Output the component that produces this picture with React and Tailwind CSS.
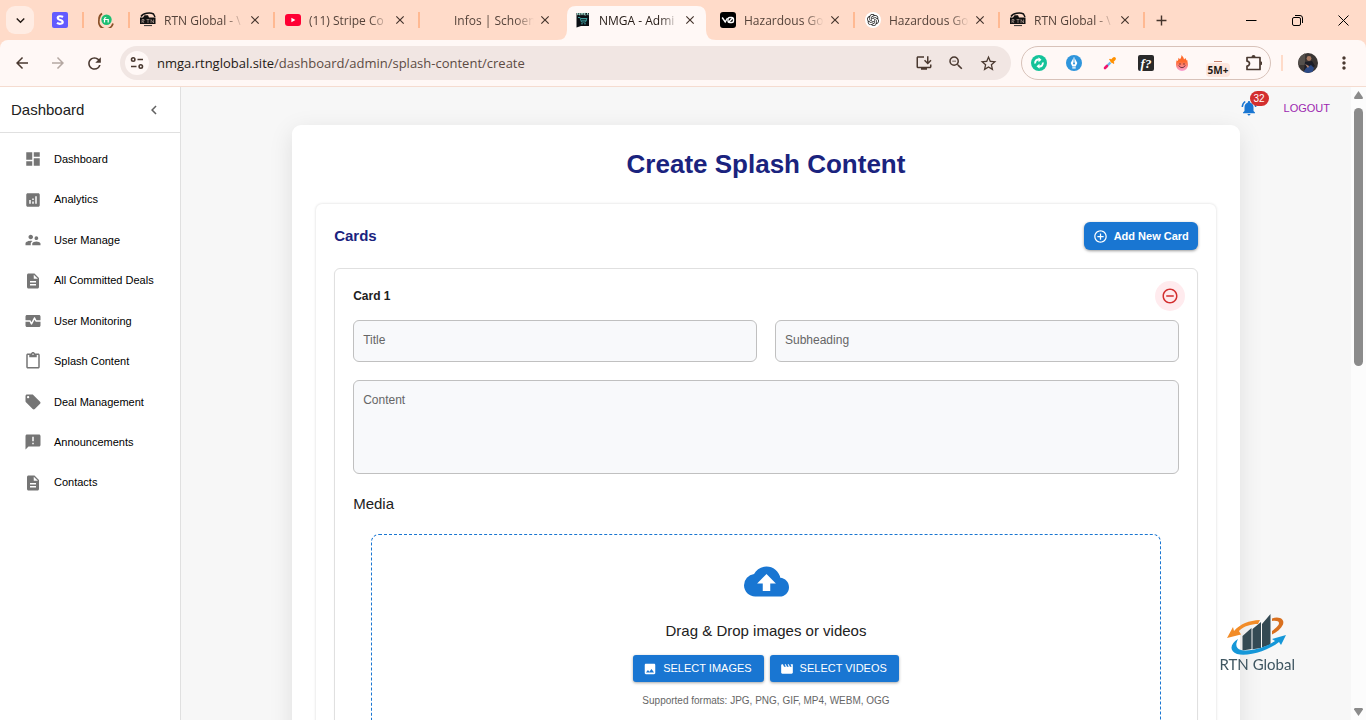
import React from "react";
import {
  MdDashboard, MdAnalytics, MdSupervisorAccount, MdDescription, MdMonitorHeart, MdContentPaste,
  MdLocalOffer, MdAnnouncement, MdNotificationsActive, MdAddCircleOutline, MdRemoveCircleOutline,
  MdCloudUpload, MdImage, MdMovie, MdChevronLeft, MdInstallDesktop, MdZoomOut, MdStarBorder,
  MdMoreVert, MdArrowBack, MdArrowForward, MdRefresh, MdClose, MdAdd, MdExpandMore,
} from "react-icons/md";
import { SiOpenai } from "react-icons/si";

const Stripe = () => (
  <svg viewBox="0 0 16 16" className="size-4">
    <rect width="16" height="16" rx="2" fill="#635bff" />
    <path d="M11 5C9.600 4 5.700 3.700 5.700 6c0 2.300 5 1.600 5 4 0 2.300-4 2.100-5.700.9" fill="none" stroke="#fff" strokeWidth="2.200" />
  </svg>
);
const Fiverr = () => (
  <svg viewBox="0 0 16 16" className="size-4">
    <circle cx="8.500" cy="7.700" r="5.200" fill="#1dbf73" />
    <path d="M4 1.500A7.200 7.200 0 0 0 1 8A7 7 0 0 0 15 11.500" fill="none" stroke="#8a5128" strokeWidth="1.700" />
    <path d="M6.500 10.500V7c0-1 .5-1.500 1.700-1.500M5.500 7.500h4.700v3" fill="none" stroke="#fff" strokeWidth="1.200" />
  </svg>
);
const Rtn = () => (
  <svg viewBox="0 0 16 16" className="size-4">
    <path d="M1 4.500C3 1.200 10 .2 13.500 2L15 5" fill="none" stroke="#111" strokeWidth="1.500" />
    <path d="M0 5.500h3l1.500-2.300h3.500l1 2.300h6.500V12H0z" fill="#111" />
    <path d="M2 11V7.500h2v1.500H2.500L4 11M6.500 7.500h3M8 7.500V11M11 11V7.500l2.500 3.500V7.500" fill="none" stroke="#e8cfc2" strokeWidth=".5" />
    <path d="M4 13.600h8" stroke="#333" strokeWidth="1" />
  </svg>
);
const Youtube = () => (
  <svg viewBox="0 0 16 16" className="size-4">
    <rect y="2" width="16" height="12" rx="3" fill="#ff0033" />
    <path d="M6.400 5.800v4.400L10.400 8z" fill="#fff" />
  </svg>
);
const Nmga = () => (
  <svg viewBox="0 0 16 16" className="size-4">
    <path d="M1.500 1H14v13H6l-4.500 1.500z" fill="#0b0f14" />
    <path d="M2.500 3.200V1l2 2.200V1M6 3.200V1l1 1.500L8 1v2.200M11 1H9.500v2H11M12 3.200l.6-2.200.6 2.200" fill="none" stroke="#bfe" strokeWidth=".7" />
    <path d="M3 5.500h2l1.500 4.500h4L12 6.500H6M6.500 8.200h5" fill="none" stroke="#3f9c9c" strokeWidth="1" />
    <circle cx="7" cy="11.700" r=".8" fill="#3f9c9c" /><circle cx="10" cy="11.700" r=".8" fill="#3f9c9c" />
  </svg>
);
const V0 = () => (
  <svg viewBox="0 0 16 16" className="size-4">
    <rect width="16" height="16" rx="3" fill="#000" />
    <path d="M2.200 5.500 5.200 10 7.500 6M8.500 10.300 13 5.700" fill="none" stroke="#fff" strokeWidth="1.400" />
    <rect x="8" y="5.500" width="5.500" height="5" rx="1.800" fill="none" stroke="#fff" strokeWidth="1.400" />
  </svg>
);
const Gpt = () => (
  <span className="flex size-4 items-center justify-center rounded-full bg-white text-[#222]"><SiOpenai size={12} /></span>
);

const tabs = [
  { icon: <Rtn />, title: "RTN Global - \\" },
  { icon: <Youtube />, title: "(11) Stripe Co" },
  { icon: <span className="size-4" />, title: "Infos | Schoen", next: true },
  { icon: <Nmga />, title: "NMGA - Admi", active: true },
  { icon: <V0 />, title: "Hazardous Go" },
  { icon: <Gpt />, title: "Hazardous Go" },
  { icon: <Rtn />, title: "RTN Global - \\" },
];

function Separator() {
  return <span className="h-4 w-0.5 shrink-0 bg-[#ffb992]" />;
}

function Tab({ icon, title, active, next }) {
  return (
    <div className="relative flex h-full w-[145px] min-w-0 items-center">
      {active && (
        <svg viewBox="0 0 159 34" preserveAspectRatio="none" className="absolute -left-2 bottom-0 h-[34px] w-[159px] text-[#fff8f6]">
          <path d="M0 34Q10 34 10 24V9Q10 0 19 0H140Q149 0 149 9V24Q149 34 159 34Z" fill="currentColor" />
        </svg>
      )}
      <div className="relative flex min-w-0 flex-1 items-center pl-2.5">
        <span className="flex size-4 shrink-0">{icon}</span>
        <span className={`ml-2 w-20 pt-0.5 text-xs whitespace-nowrap [mask-image:linear-gradient(to_right,black_76%,transparent_100%)] ${active ? "text-[#241a15]" : "text-[#55433a]"}`}>{title}</span>
        <button aria-label={`Close ${title}`} className="ml-[3px] flex size-4 shrink-0 items-center justify-center text-[#44342c]"><MdClose size={14} /></button>
      </div>
      {active || next ? <span className="w-0.5" /> : <Separator />}
    </div>
  );
}

function TabBar() {
  return (
    <div className="flex h-10 items-center bg-[#ffdbc9]">
      <button aria-label="Search tabs" className="ml-1.5 flex size-7 shrink-0 items-center justify-center rounded-[9px] bg-[#ffece3] text-[#241a15]"><MdExpandMore size={17} /></button>
      <div className="ml-1 flex w-[46px] shrink-0 items-center justify-between pl-3.5"><Stripe /><Separator /></div>
      <div className="flex w-[46px] shrink-0 items-center justify-between pl-3.5"><Fiverr /><Separator /></div>
      {tabs.map((t, i) => <Tab key={i} {...t} />)}
      <button aria-label="New tab" className="ml-1.5 flex size-5 items-center justify-center text-[#44342c]"><MdAdd size={17} /></button>
      <div className="ml-auto flex items-center text-black">
        <button aria-label="Minimize" className="flex h-8 w-[46px] items-center justify-center"><svg width="11" height="11"><path d="M0 5.500h10.500" stroke="currentColor" /></svg></button>
        <button aria-label="Restore" className="flex h-8 w-[46px] items-center justify-center"><svg width="11" height="11" fill="none" stroke="currentColor"><rect x=".5" y="2.500" width="8" height="8" rx="1.500" /><path d="M3 .5h5a2.500 2.500 0 0 1 2.500 2.500v5" /></svg></button>
        <button aria-label="Close window" className="flex h-8 w-[46px] items-center justify-center"><svg width="11" height="11"><path d="M.5.500l10 10M10.500.500l-10 10" stroke="currentColor" /></svg></button>
      </div>
    </div>
  );
}

function Extensions() {
  const cell = "flex w-9 items-center justify-center";
  return (
    <div className="ml-2.5 flex h-[34px] shrink-0 items-center rounded-full border border-[#d8c2b9]">
      <button aria-label="Sync" className="flex w-[34px] items-center justify-center">
        <svg viewBox="0 0 16 16" className="size-4"><circle cx="8" cy="8" r="8" fill="#15c39a" /><path d="M4.200 8.500C3.800 6 5.500 4.300 8 4.600M11.800 7.500c.4 2.500-1.300 4.200-3.800 3.900" fill="none" stroke="#fff" strokeWidth="1.900" /><path d="M7.500 2.300l3 2.500-3 2.400zM8.500 8.800l-3 2.500 3 2.400z" fill="#fff" /></svg>
      </button>
      <button aria-label="Pen" className={cell}>
        <svg viewBox="0 0 16 16" className="size-4"><circle cx="8" cy="8" r="8" fill="#2f95dc" /><path d="M8 2l3.300 6-1.600 3.500H6.300L4.700 8zM6.300 12.200h3.400v1.300H6.300z" fill="#fff" /><path d="M8 3v5.500" stroke="#2f95dc" strokeWidth=".8" /><circle cx="8" cy="8.600" r="1" fill="#2f95dc" /></svg>
      </button>
      <button aria-label="Color picker" className={cell}>
        <svg viewBox="0 0 16 16" className="size-4"><path d="M4.500 11.500l4-4" stroke="#6db8ea" strokeWidth="2.400" /><path d="M3 13l2-2" stroke="#f0146e" strokeWidth="2.600" strokeLinecap="round" /><path d="M8 4.500L11.500 8" stroke="#ff8a00" strokeWidth="1.600" strokeLinecap="round" /><path d="M10 6l2.200-2.200" stroke="#ff9100" strokeWidth="3.400" strokeLinecap="round" /></svg>
      </button>
      <button aria-label="Font finder" className={cell}>
        <span className="flex size-4 items-center justify-center rounded-xs bg-[#2a2a2a] font-['Liberation_Serif',serif] text-[13px] leading-none font-bold text-white italic">f?</span>
      </button>
      <button aria-label="Flame" className={cell}>
        <svg viewBox="0 0 16 16" className="size-4"><defs><linearGradient id="flame" x1="0" y1="0" x2="0" y2="1"><stop offset=".4" stopColor="#ff6a2b" /><stop offset="1" stopColor="#f9a0d6" /></linearGradient></defs><path d="M7.500 0c1 1.200 2.300 2.500 2.500 4.500L11.500 3c.3 1 .6 1.700 1.200 2.600L13.300 5c.1 1.800.7 3 .7 5A6 6 0 0 1 8 16 6 6 0 0 1 2 10c0-2 .3-3 .6-4.800l.9.8C4.500 5 4.300 4 4.500 2.800l1.500 1.400C7 3 7.500 1.800 7.500 0z" fill="url(#flame)" /><path d="M4.800 10.500c1.500 2.800 4.900 2.800 6.400 0" fill="none" stroke="#5a2333" strokeWidth=".9" /><circle cx="6" cy="9" r=".7" fill="#5a2333" /><circle cx="10" cy="9" r=".7" fill="#5a2333" /></svg>
      </button>
      <button aria-label="Counter" className={`${cell} flex-col`}>
        <span className="h-px w-2 bg-[#c9826f]" />
        <span className="mt-px -mb-3 rounded bg-[#fde6de] px-0.5 text-[10px] leading-[14px] font-bold text-[#241a15]">5M+</span>
      </button>
      <button aria-label="Extensions" className="flex w-[34px] items-center justify-center text-[#4a3930]">
        <svg viewBox="0 0 18 18" className="size-[18px]" fill="none" stroke="currentColor" strokeWidth="1.700"><path d="M3 3.500h13V15.500H3v-3.400a2.500 2.500 0 0 0 0-5z" strokeLinejoin="round" /><path d="M7.500 3a2 2 0 0 1 4 0zM16.300 7.300a2 2 0 0 1 0 4z" fill="currentColor" stroke="none" /></svg>
      </button>
    </div>
  );
}

function Toolbar() {
  return (
    <div className="bg-[#ffdbc9]">
      <div className="flex h-[47px] items-center rounded-t-lg border-b border-[#f5dcd0] bg-[#fff8f6] text-[#4a3930]">
        <button aria-label="Back" className="ml-1 flex w-9 justify-center"><MdArrowBack size={18} /></button>
        <button aria-label="Forward" className="flex w-9 justify-center text-[#b5a8a2]"><MdArrowForward size={18} /></button>
        <button aria-label="Reload" className="flex w-9 justify-center"><MdRefresh size={19} /></button>
        <div className="ml-2 flex h-[34px] min-w-0 flex-1 items-center rounded-full bg-[#f1e6e3]">
          <button aria-label="Site information" className="ml-[5px] flex size-6 shrink-0 items-center justify-center rounded-full bg-[#fff8f6]">
            <svg viewBox="0 0 14 14" className="size-3.5" fill="none" stroke="currentColor" strokeWidth="1.600"><circle cx="3.200" cy="3.500" r="1.700" /><path d="M7.500 3.500H13M1 10.500h5.500" /><circle cx="10.800" cy="10.500" r="1.700" /></svg>
          </button>
          <div className="ml-2 min-w-0 flex-1 pt-px text-[13px] text-[#5c4b43]">
            <span className="text-[#241a15]">nmga.rtnglobal.site</span>/dashboard/admin/splash-content/create
          </div>
          <button aria-label="Install" className="flex w-8 justify-center"><MdInstallDesktop size={18} /></button>
          <button aria-label="Zoom" className="flex w-8 justify-center"><MdZoomOut size={18} /></button>
          <button aria-label="Bookmark" className="mr-[7px] flex w-8 justify-center"><MdStarBorder size={19} /></button>
        </div>
        <Extensions />
        <span className="ml-2.5 h-4 w-0.5 bg-[#ffdbc9]" />
        <button aria-label="Profile" className="ml-[15px]">
          <svg viewBox="0 0 20 20" className="size-5"><defs><clipPath id="face"><circle cx="10" cy="10" r="10" /></clipPath></defs><g clipPath="url(#face)"><rect width="20" height="20" fill="#3a3533" /><path d="M0 0h7v12H0z" fill="#55504c" /><circle cx="11" cy="5.500" r="2.400" fill="#a87a62" /><path d="M7 9l7-1 3 5-5 4H6z" fill="#1c1e28" /><path d="M5 20l3-5 5-3 3 3-2 5z" fill="#2c4a86" /><path d="M7 11l4 2-1 2z" fill="#b88670" /></g></svg>
        </button>
        <button aria-label="Menu" className="mr-3 ml-4 flex"><MdMoreVert size={20} /></button>
      </div>
    </div>
  );
}

const links = [
  ["Dashboard", MdDashboard],
  ["Analytics", MdAnalytics],
  ["User Manage", MdSupervisorAccount],
  ["All Committed Deals", MdDescription],
  ["User Monitoring", MdMonitorHeart],
  ["Splash Content", MdContentPaste],
  ["Deal Management", MdLocalOffer],
  ["Announcements", MdAnnouncement],
  ["Contacts", MdDescription],
];

function Sidebar() {
  return (
    <aside className="w-[181px] shrink-0 border-r border-[#e0e0e0] bg-white">
      <div className="flex h-[46px] items-center justify-between border-b border-[#e0e0e0] pt-px pr-[17px] pl-[11px]">
        <span className="text-[15px] leading-5 text-[#212121]">Dashboard</span>
        <button aria-label="Collapse sidebar" className="text-[#616161]"><MdChevronLeft size={18} /></button>
      </div>
      <nav className="flex h-[376px] flex-col py-1.5">
        {links.map(([label, Icon]) => (
          <a key={label} href="#" className="flex flex-1 items-center gap-3 pl-6 text-[11px] text-black">
            <Icon size={18} className="text-[#757575]" />
            {label}
          </a>
        ))}
      </nav>
    </aside>
  );
}

function Field({ id, label, multiline }) {
  const cls = "peer block w-full rounded-md border border-[#c0c0c0] bg-[#f8f9fb] px-[9px] text-xs text-[#212121] outline-none";
  return (
    <div className="relative">
      {multiline
        ? <textarea id={id} placeholder=" " className={`${cls} h-[94px] resize-none py-[11px]`} />
        : <input id={id} placeholder=" " className={`${cls} h-[42px]`} />}
      <label htmlFor={id} className="pointer-events-none absolute top-3 left-2.5 text-xs text-[#666] peer-[:not(:placeholder-shown)]:hidden">{label}</label>
    </div>
  );
}

function CardEditor() {
  return (
    <div className="mt-[18px] rounded-md border border-[#e0e0e0] bg-white px-[18px] pt-3 shadow-[0_1px_1px_#e4e4e4]">
      <div className="flex items-center justify-between">
        <h3 className="text-xs font-bold text-[#212121]">Card 1</h3>
        <button aria-label="Remove card" className="-mr-1.5 flex size-[30px] items-center justify-center rounded-full bg-[#ffebee] text-[#d32f2f]"><MdRemoveCircleOutline size={18} /></button>
      </div>
      <div className="mt-[9px] grid grid-cols-2 gap-[18px]">
        <Field id="title" label="Title" />
        <Field id="subheading" label="Subheading" />
        <div className="col-span-2"><Field id="content" label="Content" multiline /></div>
      </div>
      <h4 className="mt-5 text-[15px] leading-5 text-[#212121]">Media</h4>
      <div className="mx-[18px] mt-5 flex flex-col items-center rounded-lg border border-dashed border-[#1976d2] pt-6 pb-8">
        <MdCloudUpload size={45} className="text-[#1976d2]" />
        <p className="mt-[17px] text-[15px] leading-5 text-[#212121]">Drag &amp; Drop images or videos</p>
        <div className="mt-3.5 flex gap-1.5">
          <button className="flex h-[27px] items-center gap-1.5 rounded-[3px] bg-[#1976d2] pr-3 pl-2.5 text-[11px] text-white shadow-[0_1px_3px_rgba(0,0,0,.35)]"><MdImage size={14} />SELECT IMAGES</button>
          <button className="flex h-[27px] items-center gap-1.5 rounded-[3px] bg-[#1976d2] pr-3 pl-2.5 text-[11px] text-white shadow-[0_1px_3px_rgba(0,0,0,.35)]"><MdMovie size={14} />SELECT VIDEOS</button>
        </div>
        <p className="mt-[13px] text-[10px] leading-3 text-[#666]">Supported formats: JPG, PNG, GIF, MP4, WEBM, OGG</p>
      </div>
    </div>
  );
}

function Watermark() {
  return (
    <div className="fixed right-[71px] bottom-12 flex flex-col items-center">
      <svg viewBox="0 0 60 42" className="h-[42px] w-[60px]">
        <path d="M7 17C13 10 22 6.500 33 6l-2 4C24 10 17 12 12 17l2 3.500L0 24 6 13z" fill="#f28c28" />
        <path d="M45 4.500C52 2 58 5 56 10.500 54 15 50 18 45 20.500V17c4-3 7-5.500 7-8 0-2-3-2.500-7-2z" fill="#d9701f" />
        <path d="M15.500 22l9-8v21l-9 1.500zM25.500 15l8.500-7v26l-8.500 1.200zM35 10l8.500-10v30.500l-8.500 3z" fill="#344a54" />
        <path d="M11 25C3 30 2 37 10 40c10 3 31-3 42-12l2 3 5-10-14 4 3 2C38 34 22 38 14 36c-5-1-6-5-3-11z" fill="#1597d8" />
      </svg>
      <span className="font-[Lato,sans-serif] text-[15px] leading-4 text-[#3f5661]">RTN Global</span>
    </div>
  );
}

export default function App() {
  return (
    <div className="flex h-screen flex-col overflow-hidden font-['Liberation_Sans',Arial,sans-serif]">
      <header className="shrink-0 font-['Open_Sans',sans-serif]">
        <TabBar />
        <Toolbar />
      </header>
      <div className="flex min-h-0 flex-1">
        <Sidebar />
        <main className="min-w-0 flex-1 overflow-hidden bg-[#f7f7f7]">
          <div className="flex h-[38px] items-center justify-end gap-[26px] pt-1 pr-[21px]">
            <button aria-label="Notifications" className="relative flex text-[#1976d2]">
              <MdNotificationsActive size={18} />
              <span className="absolute -top-2 left-2.5 flex h-[15px] items-center rounded-full bg-[#d32f2f] px-1 text-[10px] text-white">32</span>
            </button>
            <button className="text-[11px] text-[#9c27b0]">LOGOUT</button>
          </div>
          <section className="mx-auto w-[81%] rounded-[9px] bg-white px-6 pt-6 shadow-[0_6px_24px_rgba(0,0,0,.1)]">
            <h1 className="text-center text-[26px] leading-[30px] font-bold text-[#1a237e]">Create Splash Content</h1>
            <div className="mt-[25px] rounded-md p-[18px] shadow-[0_0_3px_rgba(0,0,0,.16)]">
              <div className="flex items-center justify-between">
                <h2 className="text-[15px] font-bold text-[#1a237e]">Cards</h2>
                <button className="flex h-7 items-center gap-1.5 rounded-md bg-[#1976d2] px-[9px] text-[11px] font-bold text-white shadow-[0_1px_3px_rgba(0,0,0,.4)]"><MdAddCircleOutline size={15} />Add New Card</button>
              </div>
              <CardEditor />
            </div>
          </section>
        </main>
        <div className="flex w-[15px] shrink-0 flex-col items-center bg-[#fcfcfc] text-[#8b8b8b]">
          <svg viewBox="0 0 9 8" className="mt-1 h-2 w-[9px]"><path d="M4.500 0 9 6.500Q9 8 8 8H1Q0 8 0 6.500z" fill="currentColor" /></svg>
          <div className="mt-[9px] h-[258px] w-[9px] rounded-full bg-[#8b8b8b]" />
          <svg viewBox="0 0 9 8" className="mt-auto mb-1 h-2 w-[9px]"><path d="M4.500 8 9 1.500Q9 0 8 0H1Q0 0 0 1.500z" fill="currentColor" /></svg>
        </div>
      </div>
      <Watermark />
    </div>
  );
}
